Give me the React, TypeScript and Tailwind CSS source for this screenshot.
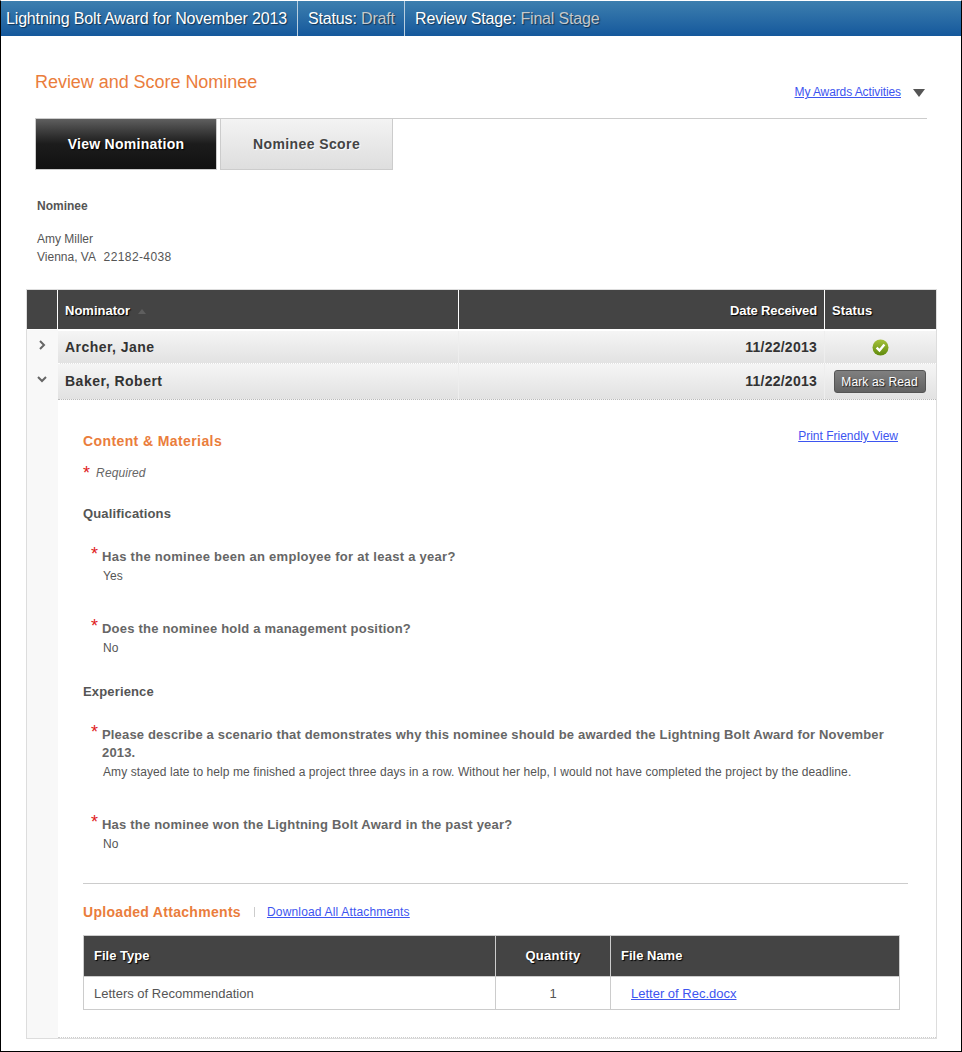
const FONT = "font-['Liberation_Sans',Arial,sans-serif]";

const Star = () => <span className="text-[#e0201b] text-[18px] font-normal leading-none">*</span>;

type QuestionProps = {
  label: string;
  answer: string;
  className: string;
  labelClass: string;
};

const Question = ({ label, answer, className, labelClass }: QuestionProps) => (
  <div className={`ml-[8px] ${className}`}>
    <div className={`relative pl-[11px] pr-[12px] text-[13px] leading-[18px] font-bold text-[#666] ${labelClass}`}>
      <span className="absolute left-0 top-[-3px]">
        <Star />
      </span>
      {label}
    </div>
    <div className="pl-[12px] mt-[2px] text-[12px] leading-[16px] text-[#555] tracking-[0.08px]">{answer}</div>
  </div>
);

const Chevron = ({ down }: { down?: boolean }) => (
  <svg width="10" height="10" viewBox="0 0 10 10" className="block">
    <path
      d={down ? 'M1 3 L5 7 L9 3' : 'M3 1 L7 5 L3 9'}
      fill="none"
      stroke="#666"
      strokeWidth="2"
    />
  </svg>
);

const CheckBadge = () => (
  <svg width="17" height="17" viewBox="0 0 17 17" className="block">
    <defs>
      <linearGradient id="badge" x1="0" y1="0" x2="0" y2="1">
        <stop offset="0" stopColor="#a6c23c" />
        <stop offset="1" stopColor="#5f8a0c" />
      </linearGradient>
    </defs>
    <circle cx="8.5" cy="8.5" r="8" fill="url(#badge)" />
    <path d="M4.6 8.6 L7.5 11.4 L12.4 5.6" fill="none" stroke="#fff" strokeWidth="2.4" />
  </svg>
);

const rowBg = 'bg-gradient-to-b from-[#f5f5f5] to-[#e2e2e2]';
const headShadow = '[text-shadow:1px_1px_1px_#000]';

export default function App() {
  return (
    <div className={`${FONT} w-[962px] h-[1052px] overflow-hidden bg-white border-x border-b border-black border-t border-t-white`}>
      {/* top bar */}
      <div className="h-[35px] flex items-center bg-gradient-to-b from-[#3d7fae] to-[#14589c] text-[16px] tracking-[-0.16px] text-white [text-shadow:1px_1px_1px_rgba(0,0,0,0.5)]">
        <div className="h-full flex items-center pl-[5px] w-[297px] border-r border-[#b9cfe0]">Lightning Bolt Award for November 2013</div>
        <div className="h-full flex items-center pl-[10px] w-[107px] border-r border-[#b9cfe0]">
          Status:&nbsp;<span className="text-[#c5c9cc]">Draft</span>
        </div>
        <div className="h-full flex items-center pl-[10px]">
          Review Stage:&nbsp;<span className="text-[#c5c9cc]">Final Stage</span>
        </div>
      </div>

      {/* page heading */}
      <div className="ml-[34px] mr-[34px] border-b border-[#cccccc] h-[83px] flex justify-between">
        <div className="mt-[36px] text-[18px] leading-[21px] tracking-[-0.04px] text-[#ea7d3c]">Review and Score Nominee</div>
        <div className="mt-[49px] mr-[2px] flex items-start text-[12px] leading-[14px] h-[14px]">
          <a className="text-[#3d55f0] underline tracking-[-0.1px]">My Awards Activities</a>
          <svg width="12" height="8" viewBox="0 0 12 8" className="ml-[12px] mt-[4px]">
            <path d="M0 0 H12 L6 8 Z" fill="#555" />
          </svg>
        </div>
      </div>

      {/* tabs */}
      <div className="ml-[34px] flex gap-[3px] mt-[-1px]">
        <div className="w-[182px] h-[52px] flex items-center justify-center border border-[#cccccc] bg-gradient-to-b from-[#5f5f5f] via-[#1c1c1c] to-[#111] text-[14px] font-bold tracking-[0.27px] text-white [text-shadow:1px_1px_1px_#000]">
          View Nomination
        </div>
        <div className="w-[173px] h-[52px] flex items-center justify-center border border-[#cccccc] bg-gradient-to-b from-[#f3f3f3] to-[#dedede] text-[14px] font-bold text-[#444] tracking-[0.4px] [text-shadow:1px_1px_1px_#fff]">
          Nominee Score
        </div>
      </div>

      {/* nominee */}
      <div className="ml-[36px] mt-[27px] text-[12px] leading-[18px] text-[#555]">
        <div className="font-bold">Nominee</div>
        <div className="mt-[15px]">Amy Miller</div>
        <div>
          Vienna, VA&nbsp;&nbsp;<span className="pl-[1px] tracking-[0.4px]">22182-4038</span>
        </div>
      </div>

      {/* nominators panel */}
      <div className="ml-[25px] mt-[23px] w-[911px] h-[750px] border border-[#dddddd] flex flex-col overflow-hidden">
        <div className="h-[40px] shrink-0 grid grid-cols-[31px_401px_366px_111px] bg-[#444444] text-white text-[13px] font-bold border-b border-white">
          <div className="border-r border-white" />
          <div className={`border-r border-white flex items-center pl-[7px] pt-[2px] ${headShadow}`}>
            Nominator
            <svg width="8" height="5" viewBox="0 0 8 5" className="ml-[8px] mt-[2px]">
              <path d="M0 5 H8 L4 0 Z" fill="#5e5e5e" />
            </svg>
          </div>
          <div className={`border-r border-white flex items-center justify-end pr-[7px] pt-[2px] tracking-[-0.15px] ${headShadow}`}>Date Received</div>
          <div className={`flex items-center pl-[7px] pt-[2px] tracking-[0.1px] ${headShadow}`}>Status</div>
        </div>

        <div className="flex-1 flex min-h-0">
          <div className="w-[31px] shrink-0 bg-[#f8f8f8]">
            <div className="h-[33px] flex items-start pt-[10px] justify-center pr-[1px]"><Chevron /></div>
            <div className="h-[33px] flex items-start pt-[11px] justify-center pr-[1px]"><Chevron down /></div>
          </div>

          <div className="flex-1 min-w-0 flex flex-col border-b border-dotted border-[#cccccc]">
            <div className={`h-[33px] shrink-0 grid grid-cols-[401px_366px_111px] border-t border-white ${rowBg} text-[14px] font-bold text-[#333]`}>
              <div className="border-r border-[#eeeeee] flex items-center pl-[7px] tracking-[0.45px]">Archer, Jane</div>
              <div className="border-r border-[#eeeeee] flex items-center justify-end pr-[7px] tracking-[0.25px]">11/22/2013</div>
              <div className="flex items-center justify-center"><CheckBadge /></div>
            </div>
            <div className={`h-[37px] shrink-0 grid grid-cols-[401px_366px_111px] border-t border-white border-b border-dotted border-b-[#bbbbbb] ${rowBg} text-[14px] font-bold text-[#333]`}>
              <div className="border-r border-[#eeeeee] flex items-center pl-[7px] tracking-[0.5px]">Baker, Robert</div>
              <div className="border-r border-[#eeeeee] flex items-center justify-end pr-[7px] tracking-[0.25px]">11/22/2013</div>
              <div className="flex items-center justify-center pr-[2px]">
                <div className="w-[92px] h-[23px] flex items-center justify-center rounded-[3px] border border-[#555] bg-gradient-to-b from-[#808080] to-[#626262] text-[12px] font-normal tracking-[0.15px] text-white [text-shadow:1px_1px_1px_#222]">
                  Mark as Read
                </div>
              </div>
            </div>

            {/* expanded content */}
            <div className="relative flex-1 pl-[25px] pr-[28px]">
              <a className="absolute right-[38px] top-[29px] text-[12px] leading-[14px] text-[#3d55f0] underline">Print Friendly View</a>
              <div className="mt-[32px] text-[14px] leading-[18px] font-bold tracking-[0.4px] text-[#ea7d3c]">Content &amp; Materials</div>
              <div className="mt-[12px] flex items-start h-[20px] text-[12px] italic text-[#666] tracking-[0.1px]">
                <span className="not-italic mr-[6px] mt-[2px]"><Star /></span>
                <span className="leading-[20px] mt-[1px]">Required</span>
              </div>
              <div className="mt-[23px] text-[13px] leading-[18px] font-bold tracking-[0.15px] text-[#555]">Qualifications</div>

              <Question className="mt-[25px]" labelClass="tracking-[0.28px]" label="Has the nominee been an employee for at least a year?" answer="Yes" />
              <Question className="mt-[36px]" labelClass="tracking-[0.21px]" label="Does the nominee hold a management position?" answer="No" />

              <div className="mt-[27px] text-[13px] leading-[18px] font-bold tracking-[0.15px] text-[#555]">Experience</div>

              <Question
                className="mt-[25px]"
                labelClass="tracking-[0.17px]"
                label="Please describe a scenario that demonstrates why this nominee should be awarded the Lightning Bolt Award for November 2013."
                answer="Amy stayed late to help me finished a project three days in a row. Without her help, I would not have completed the project by the deadline."
              />
              <Question className="mt-[36px]" labelClass="tracking-[0.2px]" label="Has the nominee won the Lightning Bolt Award in the past year?" answer="No" />

              <div className="mt-[31px] border-t border-[#cccccc] pt-[9px] flex items-center h-[48px]">
                <span className="text-[14px] font-bold tracking-[0.3px] text-[#ea7d3c]">Uploaded Attachments</span>
                <span className="ml-[13px] mr-[12px] w-px h-[10px] bg-[#cccccc]" />
                <a className="text-[12px] text-[#3d55f0] underline tracking-[0.17px]">Download All Attachments</a>
              </div>

              <div className="mt-[4px] w-[817px] border border-[#cccccc] text-[13px]">
                <div className="h-[41px] grid grid-cols-[412px_115px_1fr] bg-[#444444] text-white text-[13px] font-bold border-b border-[#cccccc]">
                  <div className={`border-r border-[#cccccc] flex items-center pl-[10px] ${headShadow}`}>File Type</div>
                  <div className={`border-r border-[#cccccc] flex items-center justify-center tracking-[0.3px] ${headShadow}`}>Quantity</div>
                  <div className={`flex items-center pl-[10px] ${headShadow}`}>File Name</div>
                </div>
                <div className="h-[32px] grid grid-cols-[412px_115px_1fr] text-[#555]">
                  <div className="border-r border-[#cccccc] flex items-center pl-[10px] pt-[1px]">Letters of Recommendation</div>
                  <div className="border-r border-[#cccccc] flex items-center justify-center pt-[1px]">1</div>
                  <div className="flex items-center pl-[20px] pt-[1px]">
                    <a className="text-[#3d55f0] underline">Letter of Rec.docx</a>
                  </div>
                </div>
              </div>
            </div>
          </div>
        </div>
      </div>
    </div>
  );
}
